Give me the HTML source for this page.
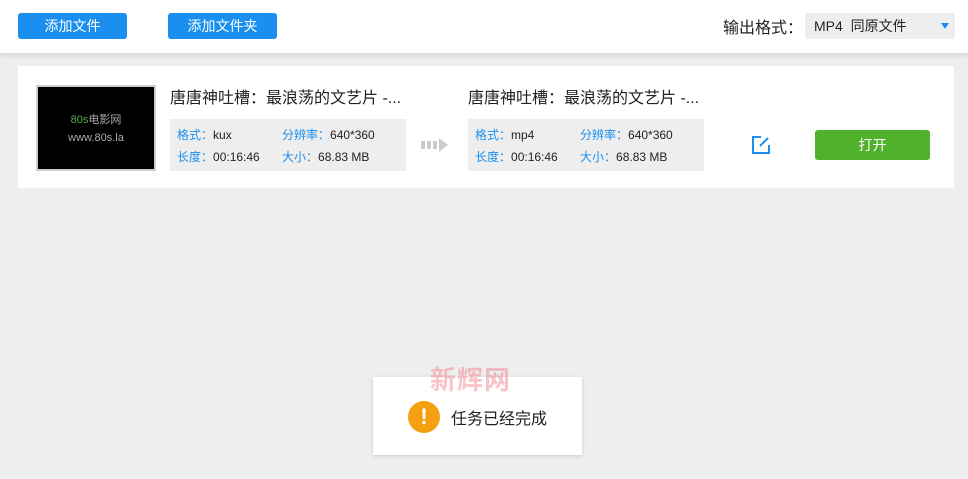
<!DOCTYPE html>
<html><head><meta charset="utf-8"><style>
*{margin:0;padding:0;box-sizing:border-box}
body{width:968px;height:479px;background:#eeeeee;font-family:"Liberation Sans","Noto Sans CJK SC",sans-serif;position:relative;overflow:hidden}
.top{position:absolute;left:0;top:0;width:968px;height:53px;background:#fff;box-shadow:0 2px 6px rgba(0,0,0,.12)}
.btn{position:absolute;top:13px;height:26px;background:#1a8ff0;color:#fff;border-radius:3px;font-size:14px;line-height:26px;text-align:center}
.abs{position:absolute}
.card{position:absolute;left:18px;top:66px;width:936px;height:122px;background:#fff}
.info{position:absolute;width:236px;height:52px;background:#eeeeee;font-size:12px;color:#222}
.info span.l{color:#1a8ff0}
.info div{position:absolute}
.title{position:absolute;font-size:16px;color:#222;white-space:nowrap}
</style></head><body>
<div class="top">
<div class="btn" style="left:18px;width:109px">添加文件</div>
<div class="btn" style="left:168px;width:109px">添加文件夹</div>
<div class="abs" style="left:723px;top:14px;font-size:16px;color:#222">输出格式：</div>
<div class="abs" style="left:805px;top:13px;width:150px;height:26px;background:#eeeeee;font-size:14px;line-height:26px;padding-left:9px;color:#222">MP4&nbsp;&nbsp;同原文件</div>
<div class="abs" style="left:941px;top:23px;width:0;height:0;border-left:4px solid transparent;border-right:4px solid transparent;border-top:6px solid #1a8ff0"></div>
</div>
<div class="card">
<div class="abs" style="left:18px;top:19px;width:120px;height:86px;background:#000;border:2px solid #ccc"></div>
<div class="abs" style="left:18px;top:45px;width:120px;text-align:center;font-size:11px;color:#aaa;line-height:18px"><span style="color:#5a5">80s</span>电影网<br>www.80s.la</div>
<div class="title" style="left:152px;top:18px">唐唐神吐槽：最浪荡的文艺片 -...</div>
<div class="info" style="left:152px;top:53px">
<div style="left:7px;top:7px"><span class="l">格式：</span>kux</div>
<div style="left:112px;top:7px"><span class="l">分辨率：</span>640*360</div>
<div style="left:7px;top:29px"><span class="l">长度：</span>00:16:46</div>
<div style="left:112px;top:29px"><span class="l">大小：</span>68.83 MB</div>
</div>
<svg class="abs" style="left:403px;top:71px" width="30" height="16"><rect x="0" y="4" width="4" height="8" fill="#ccc"/><rect x="6" y="4" width="4" height="8" fill="#ccc"/><rect x="12" y="4" width="4" height="8" fill="#ccc"/><path d="M18 1 L27 8 L18 15Z" fill="#ccc"/></svg>
<div class="title" style="left:450px;top:18px">唐唐神吐槽：最浪荡的文艺片 -...</div>
<div class="info" style="left:450px;top:53px">
<div style="left:7px;top:7px"><span class="l">格式：</span>mp4</div>
<div style="left:112px;top:7px"><span class="l">分辨率：</span>640*360</div>
<div style="left:7px;top:29px"><span class="l">长度：</span>00:16:46</div>
<div style="left:112px;top:29px"><span class="l">大小：</span>68.83 MB</div>
</div>
<svg class="abs" style="left:733px;top:69px" width="20" height="20" fill="none" stroke="#1a8ff0" stroke-width="2"><path d="M10 2H2V18H18V10"/><path d="M9 11L17 3"/></svg>
<div class="abs" style="left:797px;top:64px;width:115px;height:30px;background:#52b12c;border-radius:3px;color:#fff;font-size:14px;text-align:center;line-height:30px">打开</div>
</div>
<div class="abs" style="left:373px;top:377px;width:209px;height:78px;background:#fff;box-shadow:0 1px 4px rgba(0,0,0,.15)"></div>
<div class="abs" style="left:430px;top:360px;font-size:26px;font-weight:bold;color:rgba(240,120,130,.45);letter-spacing:1px">新辉网</div>
<div class="abs" style="left:408px;top:401px;width:32px;height:32px;border-radius:50%;background:#f5a010;color:#fff;font-weight:bold;font-size:22px;text-align:center;line-height:32px">!</div>
<div class="abs" style="left:451px;top:405px;font-size:16px;color:#222">任务已经完成</div>
</body></html>
